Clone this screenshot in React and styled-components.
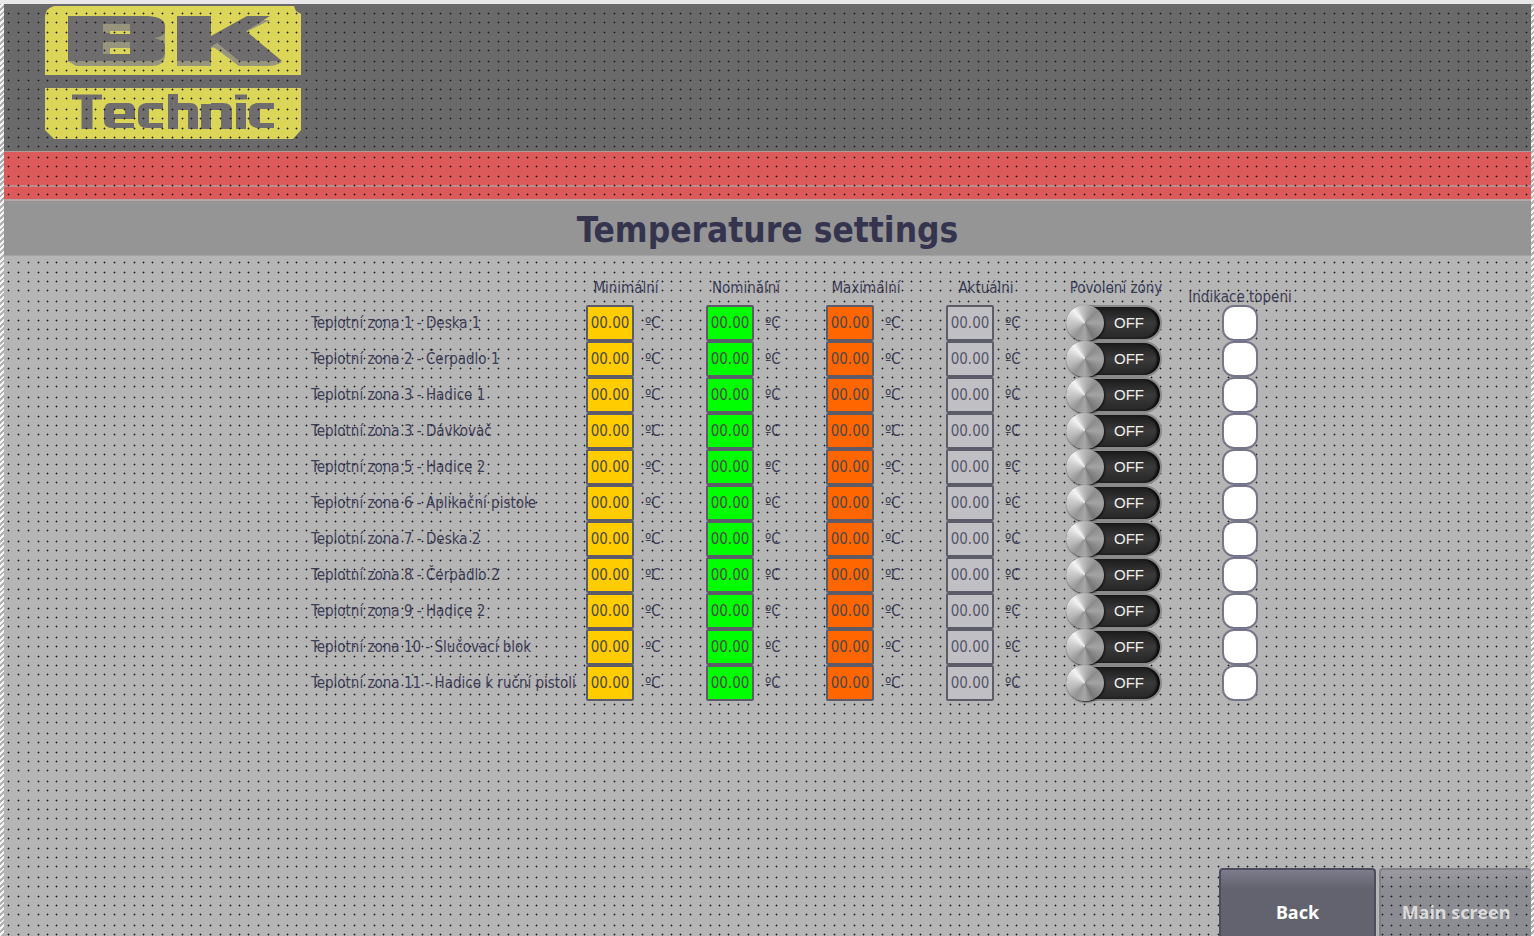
import React from 'react';
import styled, { createGlobalStyle, css } from 'styled-components';

const GlobalStyle = createGlobalStyle`
  *, *::before, *::after { box-sizing: border-box; }
  body {
    margin: 0;
    background: #e8e8e8;
    color: #3c3c55;
    font-family: "DejaVu Sans Condensed", "DejaVu Sans", sans-serif;
    font-size: 15px;
    line-height: 20px;
  }
`;

const Frame = styled.div`
  min-height: 100vh;
  padding: 4px 3px 0 4px;
  display: flex;
  background:
    linear-gradient(#e8e8e8, #e8e8e8) 0 0 / 100% 4px no-repeat,
    repeating-linear-gradient(135deg, #f4f4f4 0 2px, #b0b0b0 2px 4px);
`;

const Screen = styled.div`
  position: relative;
  isolation: isolate;
  flex: 1;
  min-width: 0;
  display: flex;
  flex-direction: column;
  overflow: hidden;
  background: #b5b5b5;
`;

const GridOverlay = styled.svg`
  position: absolute;
  inset: 0;
  width: 100%;
  height: 100%;
  z-index: 1;
  pointer-events: none;
`;

const Banner = styled.header`
  height: 147px;
  padding: 2px 41px;
  background: #6a6a6a;
`;

const Logo = styled.svg`
  display: block;
  width: 257px;
  height: 134px;
`;

const RedBand = styled.div`
  height: 50px;
  padding-top: 33px;
  background: #dc5a5a;
  border-top: 1px solid #b09a9a;
  border-bottom: 2px solid #b4a4a4;
`;

const BandLine = styled.div`
  height: 2px;
  background: #c08c8c;
`;

const TitleBar = styled.div`
  position: relative;
  z-index: 2;
  height: 55px;
  background: #959595;
  border-bottom: 1px solid #a2a2a2;
`;

const Title = styled.h1`
  margin: 0;
  color: #34344f;
  font-size: 35px;
  line-height: 58px;
  font-weight: bold;
  text-align: center;
`;

const Zones = styled.table`
  width: 983px;
  margin-left: 307px;
  border-collapse: collapse;
  table-layout: fixed;
`;

const Column = styled.col`
  width: ${({ $width }) => $width}px;
`;

const Heading = styled.th`
  height: 49px;
  padding: ${({ $low }) => ($low ? '33px 0 0' : '24px 0 0')};
  padding-right: ${({ $inset }) => $inset || 0}px;
  font-weight: normal;
  line-height: 16px;
  text-align: center;
  vertical-align: top;
  white-space: nowrap;
`;

const ZoneName = styled.th`
  height: 36px;
  padding: 0;
  font-weight: normal;
  text-align: left;
  white-space: nowrap;
`;

const Cell = styled.td`
  height: 36px;
  padding: 0;
`;

const Reading = styled.label`
  display: flex;
  align-items: center;
  gap: 11px;
`;

const fills = { minimum: '#ffcc00', nominal: '#00ff00', maximum: '#ff6600', actual: '#c0c0c4' };

const Field = styled.input`
  position: relative;
  z-index: 2;
  width: 48px;
  height: 36px;
  margin: 0;
  padding: 0;
  border: 2px solid #5c5c68;
  border-radius: 2px;
  background: ${({ $kind }) => fills[$kind]};
  color: ${({ $kind }) => ($kind === 'actual' ? '#55556a' : '#4a4a48')};
  font: inherit;
  text-align: center;
`;

const Toggle = styled.label`
  position: relative;
  z-index: 2;
  display: flex;
  align-items: center;
  width: 96px;
  height: 36px;
  border: 2px solid #8a8a8a;
  border-left: 0;
  border-radius: 18px;
  background: linear-gradient(#1c1c1c, #3a3a3a 50%, #262626);
  box-shadow: inset -3px 0 2px #0c0c0c;
  color: #f0f0f0;
  gap: 10px;
  font-family: "Liberation Sans", sans-serif;
`;

const Knob = styled.input`
  appearance: none;
  width: 38px;
  height: 36px;
  margin: 0;
  border-radius: 50%;
  flex: none;
  background: conic-gradient(
    #b4b4b4, #8c8c8c 45deg, #a4a4a4 90deg, #8c8c8c 120deg, #787878 150deg,
    #a8a8a8 180deg, #949494 215deg, #b8b8b8 250deg, #d0d0d0 285deg,
    #f4f4f4 320deg, #c8c8c8 340deg, #b4b4b4
  );
  box-shadow: 1px 1px 2px #101010;
`;

const Indicator = styled.output`
  position: relative;
  z-index: 2;
  display: block;
  width: 36px;
  height: 36px;
  margin: 0 auto;
  border: 2px solid #76768a;
  border-radius: 12px;
  background: #ffffff;
`;

const Footer = styled.nav`
  margin-top: auto;
  display: flex;
  justify-content: flex-end;
  gap: 3px;
`;

const NavButton = styled.button`
  height: 68px;
  width: ${({ disabled }) => (disabled ? 152 : 157)}px;
  padding: 18px 0 0;
  border: 2px solid #4c4c5e;
  border-bottom: 0;
  border-radius: 4px 4px 0 0;
  background: linear-gradient(#7c7c8a, #636370 18px);
  color: #ffffff;
  font-family: "Noto Sans", sans-serif;
  font-size: 18px;
  line-height: 24px;
  font-weight: bold;
  ${({ disabled }) =>
    disabled
      ? css`
          border-color: #808088;
          border-right: 0;
          background: linear-gradient(#9a9aa0, #8c8c93 18px);
          color: #dadada;
        `
      : css`
          position: relative;
          z-index: 2;
        `}
`;

const zones = [
  '1 - Deska 1', '2 - Čerpadlo 1', '3 - Hadice 1', '3 - Dávkovač', '5 - Hadice 2',
  '6 - Aplikační pistole', '7 - Deska 2', '8 - Čerpadlo 2', '9 - Hadice 2',
  '10 - Slučovací blok', '11 - Hadice k ruční pistoli',
];

const readings = [
  ['minimum', 'Minimální'],
  ['nominal', 'Nominální'],
  ['maximum', 'Maximální'],
  ['actual', 'Aktuálni'],
];

const dotColumns = [4, 14, 24, 34, 43];
const dotRows = [9, 18, 28, 37, 46];

function DotGrid() {
  return (
    <GridOverlay aria-hidden="true">
      <defs>
        <pattern id="dots" width="48" height="48" patternUnits="userSpaceOnUse">
          {dotRows.map((y) =>
            dotColumns.map((x) => (
              <g key={`${x}-${y}`}>
                <rect x={x - 1} y={y} width="3" height="1" fill="#222" opacity=".4" />
                <rect x={x} y={y - 1} width="1" height="3" fill="#222" opacity=".4" />
                <rect x={x} y={y} width="1" height="1" fill="#1c1c1c" />
              </g>
            ))
          )}
        </pattern>
      </defs>
      <rect width="100%" height="100%" fill="url(#dots)" />
    </GridOverlay>
  );
}

function BrandLogo() {
  return (
    <Logo viewBox="45 6 257 134" role="img" aria-label="BK Technic">
      <path fill="#dbd558" d="M54 6H294L296 11L301 14V75H45V16Q46 8 54 6Z" />
      <path fill="#dbd558" d="M45 88H301V130L293 139H54L45 130Z" />
      <path fill="#98957f" d="M68 20H152Q165 22 165 29V56Q164 66 152 66H76L68 61ZM177 20H211V38L246 20H270L246 32L282 62Q276 66 268 66H239L215 44L211 49V66H177Z" />
      <path fill="#6f6d6e" fillRule="evenodd" d="M68 16H148Q165 17 165 26V33Q162 37 154 38Q164 40 165 45V53Q163 61 154 61H68ZM103 24V33H130V24ZM103 42V54H130V42Z" />
      <path fill="#98957f" d="M103 24H130V31H110V33H103ZM103 42H130V48H110V54H103Z" />
      <path fill="#dbd558" d="M110 31H130V34H110ZM110 48H130V54H110Z" />
      <path fill="#6f6d6e" d="M177 16H211V36L247 16H270L246 31L282 61H239L217 43L211 47V61H177Z" />
      <path fill="#98957f" d="M211 47L217 43L239 61V66L215 48Z" />
      <g fill="none" stroke="#6f6d6e">
        <path strokeWidth="5" d="M72 97H102" />
        <path strokeWidth="11" d="M87 97V129" />
        <path strokeWidth="10" d="M173 94V129M206 104V129M241 103V129" />
        <path strokeWidth="5" d="M235 97H247" />
      </g>
      <path fill="#6f6d6e" fillRule="evenodd" d="M110 103H129Q135 104 135 110V119H115V123H134V128H112Q104 128 104 121V110Q105 103 110 103ZM114 109V114H125V109Z" />
      <path fill="#6f6d6e" d="M146 103H163V109H149V123H163V128H146Q138 127 138 120V111Q138 104 146 103ZM178 103H190Q198 103 198 111V129H188V110H178ZM211 103H223Q232 103 232 111V129H221V110H211ZM257 103H274V109H260V123H274V128H257Q249 127 249 120V111Q249 104 257 103Z" />
    </Logo>
  );
}

export default function App() {
  return (
    <>
      <GlobalStyle />
      <Frame>
        <Screen>
          <DotGrid />
          <Banner><BrandLogo /></Banner>
          <RedBand><BandLine /></RedBand>
          <TitleBar><Title>Temperature settings</Title></TitleBar>
          <Zones>
            <colgroup>
              <Column $width={275} />
              <Column $width={120} />
              <Column $width={120} />
              <Column $width={120} />
              <Column $width={120} />
              <Column $width={120} />
              <Column $width={108} />
            </colgroup>
            <thead>
              <tr>
                <td />
                {readings.map(([kind, name]) => (
                  <Heading key={kind} scope="col" $inset={40}>{name}</Heading>
                ))}
                <Heading scope="col" $inset={20}>Povolení zóny</Heading>
                <Heading scope="col" $low>Indikace topeni</Heading>
              </tr>
            </thead>
            <tbody>
              {zones.map((zone) => (
                <tr key={zone}>
                  <ZoneName scope="row">Teplotní zona {zone}</ZoneName>
                  {readings.map(([kind, name]) => (
                    <Cell key={kind}>
                      <Reading>
                        <Field
                          $kind={kind}
                          defaultValue="00.00"
                          readOnly={kind === 'actual'}
                          aria-label={`${name}, zona ${zone}`}
                        />
                        ºC
                      </Reading>
                    </Cell>
                  ))}
                  <Cell>
                    <Toggle>
                      <Knob type="checkbox" role="switch" />
                      OFF
                    </Toggle>
                  </Cell>
                  <Cell><Indicator aria-label={`Topeni, zona ${zone}`} /></Cell>
                </tr>
              ))}
            </tbody>
          </Zones>
          <Footer>
            <NavButton type="button">Back</NavButton>
            <NavButton type="button" disabled>Main screen</NavButton>
          </Footer>
        </Screen>
      </Frame>
    </>
  );
}
